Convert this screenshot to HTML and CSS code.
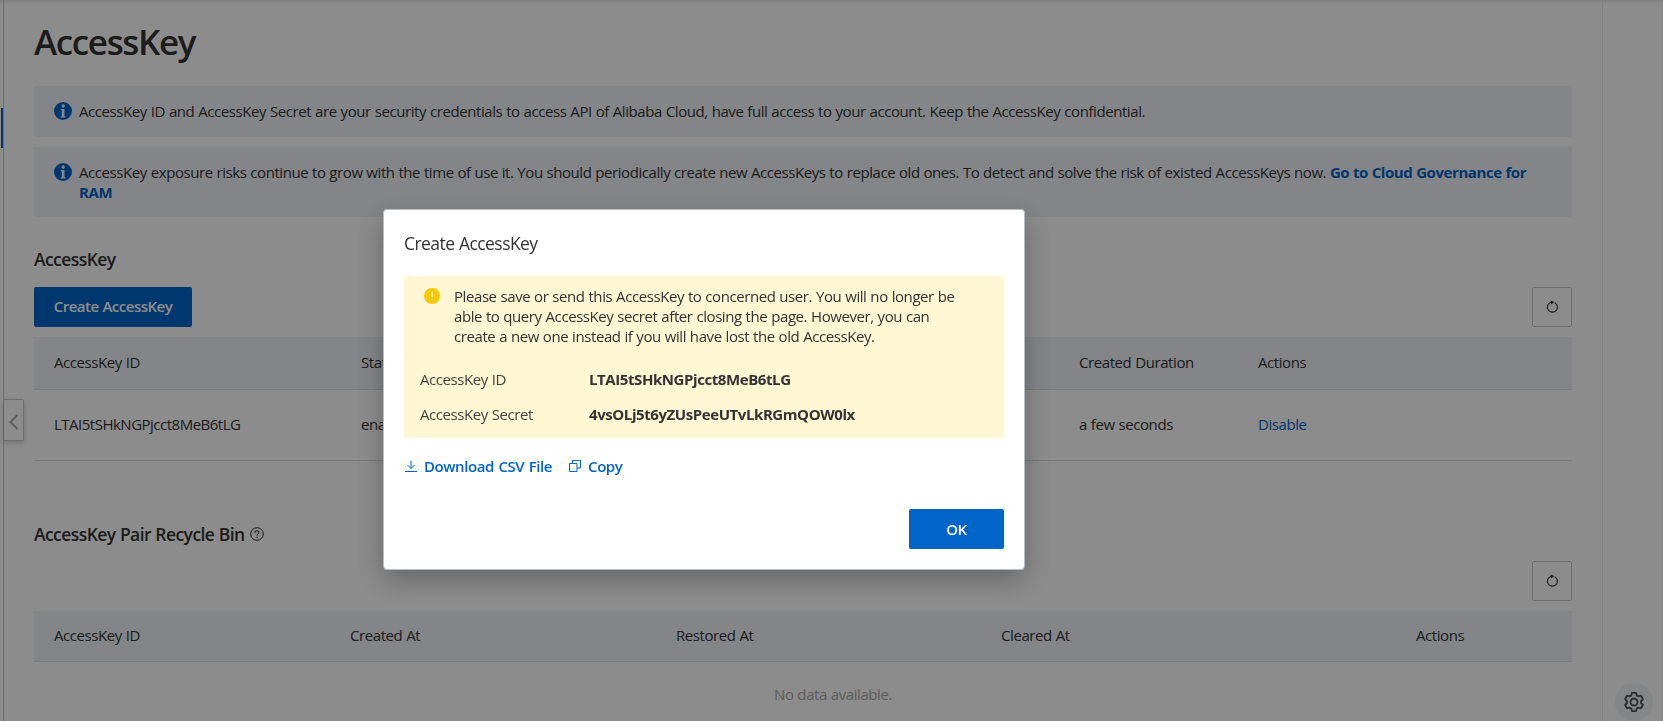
FILE: index.html
```html
<!DOCTYPE html>
<html lang="en">
<head>
<meta charset="utf-8">
<title>AccessKey</title>
<link rel="stylesheet" href="styles.css">
</head>
<body>
<div class="app">
  <aside class="rail"><span class="rail-active"></span></aside>
  <button class="collapse" aria-label="Collapse"><svg width="10" height="16" viewBox="0 0 10 16"><path d="M8.500 1L1.500 8l7 7" fill="none" stroke="#aaa" stroke-width="2"/></svg></button>
  <main class="page">
    <h1 class="title">AccessKey</h1>
    <div class="alert">
      <svg class="info" viewBox="0 0 18 18"><circle cx="9" cy="9" r="9" fill="#0064c8"/><circle cx="9.200" cy="4" r="1.700" fill="#eff3f8"/><path d="M6.800 7h3.700v7.200h1v1.300H6.800v-1.300h1V8.300h-1z" fill="#eff3f8"/></svg>
      <p class="alert-text">AccessKey ID and AccessKey Secret are your security credentials to access API of Alibaba Cloud, have full access to your account. Keep the AccessKey confidential.</p>
    </div>
    <div class="alert alert-tall">
      <svg class="info" viewBox="0 0 18 18"><circle cx="9" cy="9" r="9" fill="#0064c8"/><circle cx="9.200" cy="4" r="1.700" fill="#eff3f8"/><path d="M6.800 7h3.700v7.200h1v1.300H6.800v-1.300h1V8.300h-1z" fill="#eff3f8"/></svg>
      <p class="alert-text alert-text-long">AccessKey exposure risks continue to grow with the time of use it. You should periodically create new AccessKeys to replace old ones. To detect and solve the risk of existed AccessKeys now. <a class="strong-link">Go to Cloud Governance for<br>RAM</a></p>
    </div>
    <h2 class="section-title">AccessKey</h2>
    <div class="toolbar">
      <button class="primary create">Create AccessKey</button>
      <button class="refresh" aria-label="Refresh"><svg width="14" height="14" viewBox="0 0 14 14"><path d="M9.700 2.700A5 5 0 1 1 6.200 2.300" fill="none" stroke="#333" stroke-width="1.100"/><path d="M5.600 .4l3.600 1.700-2.900 2.400z" fill="#333"/></svg></button>
    </div>
    <div class="table keys">
      <div class="row head"><span>AccessKey ID</span><span>Status</span><span>Created Duration</span><span>Actions</span></div>
      <div class="row body"><span class="key-id">LTAI5tSHkNGPjcct8MeB6tLG</span><span>enabled</span><span>a few seconds</span><span><a class="link">Disable</a></span></div>
    </div>
    <h2 class="section-title bin-title"><span>AccessKey Pair Recycle Bin</span><svg width="14" height="14" viewBox="0 0 14 14" fill="none" stroke="#333"><circle cx="7" cy="7" r="6.300"/><path d="M5 5.700C5 3.100 9 3.100 9 5.500 9 6.900 7 6.800 7 8.600" stroke-width="1.100"/><path d="M7 9.700v1.300" stroke-width="1.200"/></svg></h2>
    <div class="toolbar bin-toolbar">
      <button class="refresh" aria-label="Refresh"><svg width="14" height="14" viewBox="0 0 14 14"><path d="M9.700 2.700A5 5 0 1 1 6.200 2.300" fill="none" stroke="#333" stroke-width="1.100"/><path d="M5.600 .4l3.600 1.700-2.900 2.400z" fill="#333"/></svg></button>
    </div>
    <div class="table bin">
      <div class="row head"><span>AccessKey ID</span><span>Created At</span><span>Restored At</span><span>Cleared At</span><span>Actions</span></div>
      <div class="empty">No data available.</div>
    </div>
  </main>
  <aside class="side">
    <div class="side-line"></div>
    <button class="gear" aria-label="Settings"><svg width="20" height="20" viewBox="0 0 20 20" fill="none" stroke="#555" stroke-width="1.900" stroke-linejoin="round"><path d="M8 .9h4l.7 2.500 1.700 1 2.500-.7 2 3.400-1.800 1.900v2l1.800 1.900-2 3.400-2.500-.7-1.700 1-.7 2.500H8l-.7-2.500-1.700-1-2.500.7-2-3.400L2.900 11V9L1.100 7.100l2-3.400 2.500.7 1.700-1z"/><circle cx="10" cy="10" r="3.500"/></svg></button>
  </aside>
</div>
<div class="overlay">
  <section class="modal">
    <h3 class="modal-title">Create AccessKey</h3>
    <div class="notice">
      <svg class="warn" viewBox="0 0 16 16"><circle cx="8" cy="8" r="8" fill="#fac800"/><path d="M8 3.600v5.600M8 11v1.500" stroke="#fff6d3" stroke-width="1.400"/></svg>
      <p class="notice-text">Please save or send this AccessKey to concerned user. You will no longer be<br>able to query AccessKey secret after closing the page. However, you can<br>create a new one instead if you will have lost the old AccessKey.</p>
    </div>
    <dl class="creds">
      <dt>AccessKey ID</dt><dd>LTAI5tSHkNGPjcct8MeB6tLG</dd>
      <dt>AccessKey Secret</dt><dd>4vsOLj5t6yZUsPeeUTvLkRGmQOW0lx</dd>
    </dl>
    <div class="links">
      <a class="action"><svg width="12" height="12" viewBox="0 0 12 12" fill="none" stroke="#0064c8"><path d="M6 .5v8M2.500 5L6 8.500 9.500 5M0 11.500h12"/></svg><span>Download CSV File</span></a>
      <a class="action"><svg width="12" height="12" viewBox="0 0 12 12" fill="none" stroke="#0064c8"><path d="M.5 3.500h7.500v8H.5zM3.500 3.500v-3h8v7.500H8"/></svg><span>Copy</span></a>
    </div>
    <footer class="modal-foot"><button class="primary ok">OK</button></footer>
  </section>
</div>
</body>
</html>
```
FILE: styles.css
```css
* { box-sizing: border-box; }
body { margin: 0; width: 1663px; height: 721px; overflow: hidden; background: #fff; color: #333; font: 15px/20px "Open Sans", "Noto Sans", sans-serif; letter-spacing: -0.42px; word-spacing: 0.4px; }
h1, h2, h3, p, dl, dd { margin: 0; font-weight: 400; }
button { font: inherit; letter-spacing: inherit; word-spacing: inherit; padding: 0; cursor: pointer; }
svg { display: block; flex: none; }
.app { display: flex; height: 721px; position: relative; box-shadow: inset 0 4px 4px -3px rgba(0,0,0,.14); }
.rail { width: 4px; border-right: 1px solid #c8c8c8; padding: 108px 0 0 1px; }
.rail-active { display: block; width: 2px; height: 40px; background: #0064c8; }
.collapse { position: absolute; left: 4px; top: 399px; width: 20px; height: 42px; background: #fff; border: 1px solid #c8c8c8; border-left: 0; border-radius: 0 2px 2px 0; box-shadow: 0 2px 5px rgba(0,0,0,.2); display: flex; align-items: center; justify-content: center; padding-top: 3px; }
.page { width: 1598px; padding: 0 30px; }
.title { height: 86px; padding-top: 19px; font-size: 35px; line-height: 46px; font-weight: 600; letter-spacing: -1.35px; }
.alert { display: flex; gap: 7px; height: 51px; padding: 16px 20px; background: #eff3f8; border-radius: 2px; }
.alert-tall { height: 70px; margin-top: 10px; }
.info { width: 18px; height: 18px; }
.alert-text { white-space: nowrap; line-height: 20px; margin-top: -1px; }
.alert-text-long { word-spacing: 0.3px; }
.strong-link { color: #0064c8; font-weight: 700; }
.section-title { height: 70px; padding-top: 30px; font-size: 17.5px; line-height: 24px; font-weight: 600; letter-spacing: -0.57px; }
.toolbar { display: flex; justify-content: space-between; height: 40px; }
.primary { height: 40px; border: 0; border-radius: 2px; background: #0064c8; color: #fff; font-weight: 600; }
.create { width: 158px; padding-bottom: 2px; letter-spacing: -0.5px; }
.refresh { width: 40px; height: 40px; border: 1px solid #c0c6cc; border-radius: 2px; background: #fff; display: flex; align-items: center; justify-content: center; padding-right: 1px; }
.table { margin-top: 10px; }
.row { display: grid; align-items: center; padding-left: 20px; padding-bottom: 2px; border-bottom: 1px solid #dee0e4; }
.head { background: #eff3f8; }
.keys .row { grid-template-columns: 307px 718px 179px 1fr; }
.keys .head { height: 53px; }
.keys .body { height: 71px; padding-bottom: 3px; }
.key-id { letter-spacing: -0.5px; }
.bin .row { grid-template-columns: 296px 326px 325px 415px 1fr; height: 51px; }
.link { color: #0064c8; }
.bin-title { display: flex; gap: 5px; align-items: center; height: 100px; padding: 46px 0 0; }
.bin-toolbar { justify-content: flex-end; }
.empty { padding: 22px 0 0 60px; text-align: center; color: #aaa; }
.side { width: 61px; border-left: 1px solid #ececec; display: flex; flex-direction: column; align-items: center; padding-top: 668px; }
.side-line { width: 52px; height: 1px; background: linear-gradient(90deg, #fff, #ccc, #fff); }
.gear { margin-top: 15px; width: 38px; height: 38px; flex: none; border: 0; border-radius: 50%; background: #f3f5f7; display: flex; align-items: center; justify-content: center; margin-left: 2px; }
.overlay { position: fixed; inset: 0; background: rgba(0,0,0,.45); padding: 209px 0 0 383px; }
.modal { width: 642px; height: 361px; background: #fff; border: 1px solid #b8bdc5; border-radius: 4px; padding: 20px; box-shadow: 0 10px 28px rgba(0,0,0,.28); }
.modal-title { height: 46px; padding-top: 1px; font-size: 17.5px; line-height: 24px; letter-spacing: -0.55px; }
.notice { display: flex; gap: 13px; height: 79px; padding: 12px 20px; background: #fff6d3; border-radius: 2px; }
.warn { width: 16px; height: 16px; }
.notice-text { white-space: nowrap; margin-top: -2px; }
.creds { display: grid; grid-template-columns: 169px 1fr; align-content: start; row-gap: 15px; height: 83px; padding: 14px 16px 0; background: #fff6d3; color: #444; }
.notice-text { padding-left: 1px; }
.creds dd { font-weight: 700; color: #333; }
.links { display: flex; gap: 17px; height: 71px; padding: 18px 0 0 1px; color: #0064c8; font-weight: 600; }
.action { display: flex; gap: 7px; align-items: center; height: 20px; word-spacing: 1px; }
.modal-foot { display: flex; justify-content: flex-end; }
.ok { width: 95px; }
```
